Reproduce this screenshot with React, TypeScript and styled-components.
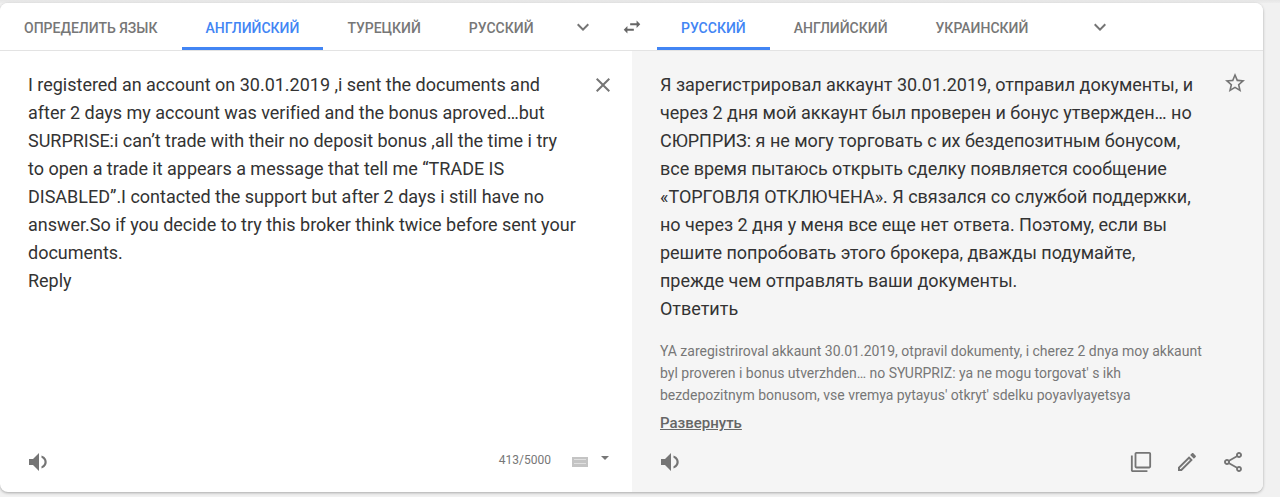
import styled, { createGlobalStyle } from "styled-components";

const GlobalStyle = createGlobalStyle`
  html, body {
    margin: 0;
    padding: 0;
    height: 497px;
    overflow: hidden;
    background: #f1f1f1;
    font-family: Roboto, "Liberation Sans", sans-serif;
  }
`;

const Page = styled.div`
  padding: 3px 17px 5px 0;
  height: 497px;
  box-sizing: border-box;
  background: linear-gradient(180deg, #e6e6e6 0, #ededed 3px, #f1f1f1 3px);
`;

const Card = styled.div`
  height: 489px;
  display: flex;
  flex-direction: column;
  background: #fff;
  border-radius: 8px;
  box-shadow: 0 1px 3px rgba(0, 0, 0, 0.3);
  overflow: hidden;
`;

const Header = styled.div`
  display: grid;
  grid-template-columns: 607px 50px 1fr;
  height: 47px;
  flex: none;
  border-bottom: 1px solid #e3e3e3;
  background: #fff;
`;

const TabGroup = styled.div`
  display: flex;
  align-items: stretch;
`;

const Tab = styled.div<{ $active?: boolean }>`
  display: flex;
  align-items: center;
  padding: 3px 24px 0;
  font-size: 14px;
  font-weight: 500;
  white-space: nowrap;
  color: ${(p) => (p.$active ? "#4285f4" : "#777")};
  box-shadow: ${(p) => (p.$active ? "inset 0 -3px 0 #4285f4" : "none")};
`;

const IconSlot = styled.div<{ $left?: number }>`
  display: flex;
  align-items: center;
  justify-content: center;
  width: 24px;
  margin-left: ${(p) => p.$left ?? 0}px;
`;

const SwapSlot = styled.div`
  display: flex;
  align-items: center;
  justify-content: center;
`;

const Panes = styled.div`
  flex: 1;
  display: grid;
  grid-template-columns: 632px 1fr;
  min-height: 0;
`;

const SourcePane = styled.div`
  display: flex;
  flex-direction: column;
  padding: 20px 17px 18px 28px;
  min-width: 0;
`;

const ResultPane = styled.div`
  display: flex;
  flex-direction: column;
  padding: 20px 16px 18px 28px;
  background: #f5f5f5;
  min-width: 0;
`;

const TextRow = styled.div`
  display: flex;
  align-items: flex-start;
  justify-content: space-between;
`;

const MainText = styled.div<{ $width: number }>`
  width: ${(p) => p.$width}px;
  font-size: 18px;
  line-height: 28px;
  letter-spacing: -0.015px;
  color: #333;
`;

const CloseSlot = styled.div`
  margin-top: 2px;
`;

const Translit = styled.div`
  width: 550px;
  margin-top: 17px;
  font-size: 14px;
  line-height: 22px;
  color: #777;
`;

const Expand = styled.div`
  margin-top: 6px;
  font-size: 15px;
  font-weight: 500;
  line-height: 22px;
  color: #666;
  text-decoration: underline;
`;

const Footer = styled.div`
  margin-top: auto;
  display: flex;
  align-items: center;
  justify-content: space-between;
  height: 24px;
`;

const Counter = styled.div`
  display: flex;
  align-items: center;
  margin-bottom: 4px;
  font-size: 12px;
  color: #777;
`;

const KeyboardKey = styled.div`
  width: 16px;
  height: 10px;
  margin: 3px 0 0 21px;
  background: #c4c4c4;
  display: flex;
  align-items: center;
  justify-content: center;

  &::after {
    content: "";
    width: 12px;
    height: 3px;
    border-top: 1px solid #e0e0e0;
    border-bottom: 1px solid #e0e0e0;
  }
`;

const Caret = styled.div`
  width: 0;
  height: 0;
  margin: -5px 6px 0 13px;
  border-left: 4px solid transparent;
  border-right: 4px solid transparent;
  border-top: 4px solid #777;
`;

const ActionRow = styled.div`
  display: flex;
  align-items: center;
  gap: 22px;
  margin-right: 2px;
`;

const SpeakerSlot = styled.div`
  margin-left: -1px;
`;

const Glyph = styled.svg<{ $color?: string }>`
  display: block;
  flex: none;
  fill: ${(p) => p.$color ?? "#757575"};
`;

const Icon = ({ d, size = 24, color }: { d: string; size?: number; color?: string }) => (
  <Glyph width={size} height={size} viewBox="0 0 24 24" $color={color}>
    <path d={d} />
  </Glyph>
);

const icons = {
  chevron: "M7.41 8.59L12 13.17l4.59-4.58L18 10l-6 6-6-6 1.41-1.41z",
  swap: "M6.99 11L3 15l3.99 4v-3H14v-2H6.99v-3zM21 9l-3.99-4v3H10v2h7.01v3L21 9z",
  close:
    "M19 6.41L17.59 5 12 10.59 6.41 5 5 6.41 10.59 12 5 17.59 6.41 19 12 13.41 17.59 19 19 17.59 13.41 12 19 6.41z",
  star:
    "M22 9.24l-7.19-.62L12 2 9.19 8.63 2 9.24l5.46 4.73L5.82 21 12 17.27 18.18 21l-1.63-7.03L22 9.24zM12 15.4l-3.76 2.27 1-4.28-3.32-2.88 4.38-.38L12 6.1l1.71 4.04 4.38.38-3.32 2.88 1 4.28L12 15.4z",
  // speaker body plus one thick arc, as in the reference
  volume:
    "M2 9v6h4l6 6V3L6 9H2zM14.5 5.5v2.3c1.8.7 3 2.3 3 4.2s-1.2 3.5-3 4.2v2.3c3-.8 5.2-3.4 5.2-6.5s-2.2-5.7-5.2-6.5z",
  copy:
    "M3 5H1v16c0 1.1.9 2 2 2h16v-2H3V5zm18-4H7c-1.1 0-2 .9-2 2v14c0 1.1.9 2 2 2h14c1.1 0 2-.9 2-2V3c0-1.1-.9-2-2-2zm0 16H7V3h14v14z",
  pencil:
    "M14.06 9.02l.92.92L5.92 19H5v-.92l9.06-9.06M17.66 3c-.25 0-.51.1-.7.29l-1.83 1.83 3.75 3.75 1.83-1.83c.39-.39.39-1.02 0-1.41l-2.34-2.34c-.2-.2-.45-.29-.71-.29zm-3.6 3.19L3 17.25V21h3.75L17.81 9.94l-3.75-3.75z",
  share:
    "M18 16.08c-.76 0-1.44.3-1.96.77L8.91 12.7c.05-.23.09-.46.09-.7s-.04-.47-.09-.7l7.05-4.11c.54.5 1.25.81 2.04.81 1.66 0 3-1.34 3-3s-1.34-3-3-3-3 1.34-3 3c0 .24.04.47.09.7L8.04 9.81C7.5 9.31 6.79 9 6 9c-1.66 0-3 1.34-3 3s1.34 3 3 3c.79 0 1.5-.31 2.04-.81l7.12 4.16c-.05.21-.08.43-.08.65 0 1.61 1.31 2.92 2.92 2.92 1.61 0 2.92-1.31 2.92-2.92s-1.31-2.92-2.92-2.92zM18 4c.55 0 1 .45 1 1s-.45 1-1 1-1-.45-1-1 .45-1 1-1zM6 13c-.55 0-1-.45-1-1s.45-1 1-1 1 .45 1 1-.45 1-1 1zm12 7.02c-.55 0-1-.45-1-1s.45-1 1-1 1 .45 1 1-.45 1-1 1z",
};

export default function App() {
  return (
    <Page>
      <GlobalStyle />
      <Card>
        <Header>
          <TabGroup>
            <Tab>ОПРЕДЕЛИТЬ ЯЗЫК</Tab>
            <Tab $active>АНГЛИЙСКИЙ</Tab>
            <Tab>ТУРЕЦКИЙ</Tab>
            <Tab>РУССКИЙ</Tab>
            <IconSlot $left={13}>
              <Icon d={icons.chevron} />
            </IconSlot>
          </TabGroup>
          <SwapSlot>
            <Icon d={icons.swap} size={22} color="#666" />
          </SwapSlot>
          <TabGroup>
            <Tab $active>РУССКИЙ</Tab>
            <Tab>АНГЛИЙСКИЙ</Tab>
            <Tab>УКРАИНСКИЙ</Tab>
            <IconSlot $left={36}>
              <Icon d={icons.chevron} />
            </IconSlot>
          </TabGroup>
        </Header>
        <Panes>
          <SourcePane>
            <TextRow>
              <MainText $width={549}>
                I registered an account on 30.01.2019 ,i sent the documents and after 2 days my
                account was verified and the bonus aproved…but SURPRISE:i can’t trade with their
                no deposit bonus ,all the time i try to open a trade it appears a message that
                tell me “TRADE IS DISABLED”.I contacted the support but after 2 days i still have
                no answer.So if you decide to try this broker think twice before sent your
                documents.
                <br />
                Reply
              </MainText>
              <CloseSlot>
                <Icon d={icons.close} />
              </CloseSlot>
            </TextRow>
            <Footer>
              <SpeakerSlot>
                <Icon d={icons.volume} />
              </SpeakerSlot>
              <Counter>
                413/5000
                <KeyboardKey />
                <Caret />
              </Counter>
            </Footer>
          </SourcePane>
          <ResultPane>
            <TextRow>
              <MainText $width={540}>
                Я зарегистрировал аккаунт 30.01.2019, отправил документы, и через 2 дня мой аккаунт
                был проверен и бонус утвержден… но СЮРПРИЗ: я не могу торговать с их бездепозитным
                бонусом, все время пытаюсь открыть сделку появляется сообщение «ТОРГОВЛЯ
                ОТКЛЮЧЕНА». Я связался со службой поддержки, но через 2 дня у меня все еще нет
                ответа. Поэтому, если вы решите попробовать этого брокера, дважды подумайте,
                прежде чем отправлять ваши документы.
                <br />
                Ответить
              </MainText>
              <Icon d={icons.star} />
            </TextRow>
            <Translit>
              YA zaregistriroval akkaunt 30.01.2019, otpravil dokumenty, i cherez 2 dnya moy akkaunt
              byl proveren i bonus utverzhden… no SYURPRIZ: ya ne mogu torgovat' s ikh
              bezdepozitnym bonusom, vse vremya pytayus' otkryt' sdelku poyavlyayetsya
            </Translit>
            <Expand>Развернуть</Expand>
            <Footer>
              <SpeakerSlot>
                <Icon d={icons.volume} />
              </SpeakerSlot>
              <ActionRow>
                <IconSlot>
                  <Icon d={icons.copy} size={22} />
                </IconSlot>
                <Icon d={icons.pencil} />
                <Icon d={icons.share} />
              </ActionRow>
            </Footer>
          </ResultPane>
        </Panes>
      </Card>
    </Page>
  );
}
